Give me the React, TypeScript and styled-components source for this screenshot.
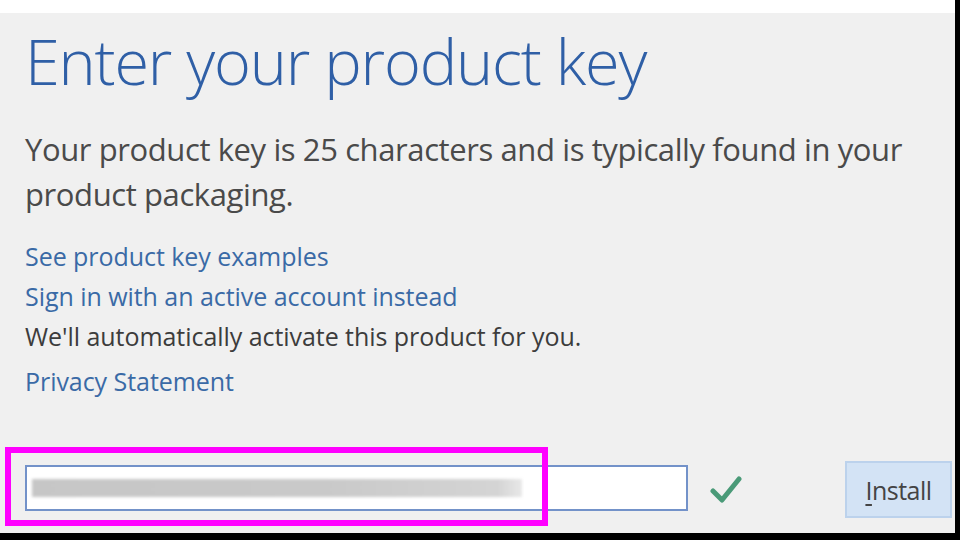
import styled, { createGlobalStyle } from "styled-components";

const GlobalStyle = createGlobalStyle`
  html, body {
    margin: 0;
    padding: 0;
    background: #000;
  }
  body {
    font-family: "Open Sans", "Noto Sans", sans-serif;
  }
`;

export default function App() {
  return (
    <>
      <GlobalStyle />
      <Frame>
        <Panel>
          <Title>Enter your product key</Title>
          <Intro>
            Your product key is 25 characters and is typically found in your
            <br />
            product packaging.
          </Intro>
          <Links>
            <Link>See product key examples</Link>
            <Link>Sign in with an active account instead</Link>
            <Note>We'll automatically activate this product for you.</Note>
            <Link $gap>Privacy Statement</Link>
          </Links>
          <Footer>
            <KeyField>
              <Blurred />
              <Highlight />
            </KeyField>
            <Check viewBox="0 0 32 30" aria-hidden>
              <path d="M3 16 L12 25 L29 4" />
            </Check>
            <InstallButton>
              <u>I</u>nstall
            </InstallButton>
          </Footer>
        </Panel>
      </Frame>
    </>
  );
}

const Frame = styled.div`
  width: 955px;
  height: 533px;
  box-sizing: border-box;
  border-top: 13px solid #fff;
  background: #f0f0f0;
  overflow: hidden;
`;

const Panel = styled.div`
  height: 100%;
  box-sizing: border-box;
  padding: 0 0 0 25px;
  display: flex;
  flex-direction: column;
`;

const Title = styled.h1`
  margin: 8px 0 0 0;
  font-size: 63px;
  font-weight: 300;
  line-height: 80px;
  color: #2f5fa6;
  letter-spacing: -1.2px;
`;

const Intro = styled.p`
  margin: 26px 0 0;
  font-size: 31px;
  line-height: 45px;
  font-weight: 400;
  color: #4a4a4a;
  letter-spacing: -0.4px;
`;

const Links = styled.div`
  margin-top: 19px;
  display: flex;
  flex-direction: column;
`;

const Link = styled.a<{ $gap?: boolean }>`
  font-size: 25px;
  line-height: 40px;
  color: #3a6aa6;
  margin-top: ${(p) => (p.$gap ? "5px" : "0")};
  letter-spacing: -0.05px;
  cursor: pointer;
`;

const Note = styled.span`
  font-size: 25px;
  line-height: 40px;
  color: #3c3c3c;
  letter-spacing: -0.05px;
`;

const Footer = styled.div`
  margin-top: auto;
  margin-bottom: 15px;
  display: flex;
  align-items: center;
`;

const KeyField = styled.div`
  position: relative;
  width: 663px;
  height: 46px;
  box-sizing: border-box;
  border: 2px solid #7392c9;
  background: #fff;
  display: flex;
  align-items: center;
  padding-left: 5px;
  margin-top: -4px;
`;

const Blurred = styled.div`
  width: 490px;
  height: 18px;
  background: linear-gradient(
    90deg,
    #c6c6c6 0%,
    #c9c9c9 60%,
    #d4d4d4 95%,
    #e8e8e8 100%
  );
  filter: blur(1.5px);
`;

const Highlight = styled.div`
  position: absolute;
  left: -22px;
  top: -20px;
  width: 543px;
  height: 79px;
  box-sizing: border-box;
  border: 6px solid #ff00ff;
  pointer-events: none;
`;

const Check = styled.svg`
  width: 32px;
  height: 30px;
  margin-left: 22px;
  fill: none;
  stroke: #4a9a78;
  stroke-width: 5;
  stroke-linecap: round;
  stroke-linejoin: round;
`;

const InstallButton = styled.button`
  margin-left: auto;
  margin-right: 3px;
  width: 107px;
  height: 57px;
  box-sizing: border-box;
  background: #d3e3f5;
  border: 2px solid #bcd2ec;
  font-family: "Open Sans", "Noto Sans", sans-serif;
  font-size: 25px;
  color: #444;
  padding: 0;
  letter-spacing: -0.5px;

  u {
    text-decoration-thickness: 2px;
    text-underline-offset: 4px;
  }
`;
